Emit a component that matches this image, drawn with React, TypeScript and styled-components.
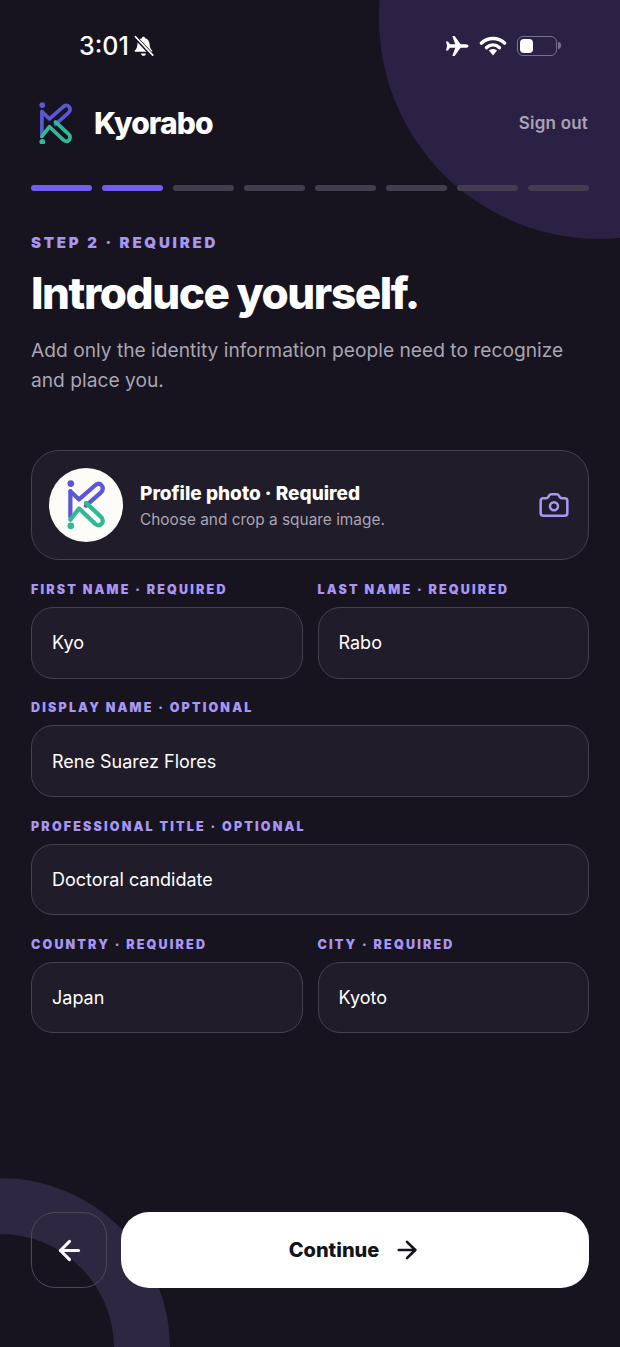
import React from "react";
import styled, { createGlobalStyle } from "styled-components";
import { ArrowLeft, ArrowRight, Camera } from "lucide-react";

const GlobalStyle = createGlobalStyle`
  html, body {
    margin: 0;
    padding: 0;
    background: #17141f;
  }
  * {
    box-sizing: border-box;
  }
`;

const KLogo = ({ size }: { size: number }) => (
  <svg width={size} height={(size * 44) / 34} viewBox="0 0 34 44" fill="none">
    <circle cx="3.4" cy="3.2" r="3" fill="#5b57d6" />
    <path
      d="M3 10 V33 M3 10 L10.8 17.4 L25.5 4.5 Q29 2 31.5 5.5 Q33 9 30 11.5 L17 23"
      stroke="#5b57d6"
      strokeWidth="3.8"
      strokeLinecap="round"
      strokeLinejoin="round"
    />
    <path
      d="M3 35.5 L10.8 25.5 L25.5 39.5 Q29 42 31.5 38.5 Q33 35 30 32.5 L17 20.5"
      stroke="#2fb996"
      strokeWidth="3.8"
      strokeLinecap="round"
      strokeLinejoin="round"
    />
    <circle cx="3.4" cy="41" r="3" fill="#2fb996" />
  </svg>
);

const fields = [
  [
    { label: "FIRST NAME · REQUIRED", value: "Kyo" },
    { label: "LAST NAME · REQUIRED", value: "Rabo" },
  ],
  [{ label: "DISPLAY NAME · OPTIONAL", value: "Rene Suarez Flores" }],
  [{ label: "PROFESSIONAL TITLE · OPTIONAL", value: "Doctoral candidate" }],
  [
    { label: "COUNTRY · REQUIRED", value: "Japan" },
    { label: "CITY · REQUIRED", value: "Kyoto" },
  ],
];

const App = () => {
  return (
    <Screen>
      <GlobalStyle />
      <TopBlob />
      <BottomRing />
      <Content>
        <StatusBar>
          <Clock>
            3:01
            <svg width="23" height="23" viewBox="0 0 20 20">
              <path
                d="M10 1.5c-.8 0-1.3.5-1.4 1.3C6 3.4 4.9 5.4 4.7 8c-.2 2.6-.6 4-2.2 5.4-.4.5-.1 1.2.6 1.2h13.8c.7 0 1-.7.6-1.2-1.6-1.4-2-2.8-2.2-5.4-.2-2.6-1.3-4.6-3.9-5.2-.1-.8-.6-1.3-1.4-1.3zM7.8 16c.2 1.2 1.1 2 2.2 2s2-.8 2.2-2z"
                fill="#fff"
              />
              <path d="M2.5 1.5 L18 18" stroke="#17141f" strokeWidth="3.4" />
              <path d="M3 1.5 L18 17.5" stroke="#fff" strokeWidth="1.5" strokeLinecap="round" />
            </svg>
          </Clock>
          <StatusIcons>
            <svg width="24" height="22" viewBox="0 0 24 22">
              <path
                d="M23.5 11c0-1.1-1.3-1.8-2.7-1.8h-5.2L9.6 1h-2.3l3 8.2H5L3 6.6H1l1.1 4.4L1 15.4h2l2-2.6h5.3l-3 8.2h2.3l6-8.2h5.2c1.4 0 2.7-.7 2.7-1.8z"
                fill="#fff"
              />
            </svg>
            <svg width="28" height="20" viewBox="0 0 28 20" fill="none">
              <path d="M2.5 7C9 1 19 1 25.5 7" stroke="#fff" strokeWidth="3.6" strokeLinecap="round" />
              <path d="M7.5 11.6c4-3.4 9-3.4 13 0" stroke="#fff" strokeWidth="3.4" strokeLinecap="round" />
              <path d="M10 14.6c2.4-2 5.6-2 8 0L14 19.4z" fill="#fff" />
            </svg>
            <Battery>
              <BatteryFill />
            </Battery>
          </StatusIcons>
        </StatusBar>

        <Header>
          <Brand>
            <KLogo size={33} />
            <BrandName>Kyorabo</BrandName>
          </Brand>
          <SignOut>Sign out</SignOut>
        </Header>

        <Progress>
          {Array.from({ length: 8 }).map((_, i) => (
            <Segment key={i} $active={i < 2} />
          ))}
        </Progress>

        <Eyebrow>STEP 2 · REQUIRED</Eyebrow>
        <Title>Introduce yourself.</Title>
        <Lead>
          Add only the identity information people need to recognize and place
          you.
        </Lead>

        <PhotoCard>
          <Avatar>
            <KLogo size={38} />
          </Avatar>
          <PhotoText>
            <PhotoTitle>Profile photo · Required</PhotoTitle>
            <PhotoHint>Choose and crop a square image.</PhotoHint>
          </PhotoText>
          <Camera size={32} color="#a896f5" strokeWidth={1.9} />
        </PhotoCard>

        <Form>
          {fields.map((row) => (
            <Row key={row[0].label}>
              {row.map((f) => (
                <Field key={f.label}>
                  <FieldLabel>{f.label}</FieldLabel>
                  <InputBox>{f.value}</InputBox>
                </Field>
              ))}
            </Row>
          ))}
        </Form>

        <Spacer />

        <Footer>
          <BackButton>
            <ArrowLeft size={31} color="#fff" strokeWidth={2.4} />
          </BackButton>
          <ContinueButton>
            Continue
            <ArrowRight size={28} color="#14121b" strokeWidth={2.3} />
          </ContinueButton>
        </Footer>
      </Content>
    </Screen>
  );
};

export default App;

const Screen = styled.div`
  position: relative;
  width: 620px;
  height: 1347px;
  overflow: hidden;
  background: #17141f;
  font-family: Inter, "Liberation Sans", sans-serif;
  color: #fff;
`;

const TopBlob = styled.div`
  position: absolute;
  top: -202px;
  right: -200px;
  width: 441px;
  height: 441px;
  border-radius: 50%;
  background: #2b2145;
`;

const BottomRing = styled.div`
  position: absolute;
  left: -170px;
  bottom: -171px;
  width: 340px;
  height: 340px;
  border-radius: 50%;
  border: 56px solid #2d2742;
`;

const Content = styled.div`
  position: relative;
  display: flex;
  flex-direction: column;
  height: 100%;
  padding: 0 31px 59px;
`;

const StatusBar = styled.div`
  display: flex;
  justify-content: space-between;
  align-items: center;
  height: 34px;
  margin-top: 29px;
  padding: 0 32px 0 48px;
`;

const Clock = styled.div`
  display: flex;
  align-items: center;
  gap: 3px;
  font-size: 25px;
  font-weight: 500;
`;

const StatusIcons = styled.div`
  display: flex;
  align-items: center;
  gap: 10px;
`;

const Battery = styled.div`
  position: relative;
  width: 40px;
  height: 20px;
  padding: 2px;
  border: 1.5px solid #77718a;
  border-radius: 6px;

  &::after {
    content: "";
    position: absolute;
    right: -5px;
    top: 5px;
    width: 3px;
    height: 7px;
    border-radius: 0 3px 3px 0;
    background: #77718a;
  }
`;

const BatteryFill = styled.div`
  width: 13px;
  height: 100%;
  border-radius: 4px;
  background: #fff;
`;

const Header = styled.div`
  display: flex;
  justify-content: space-between;
  align-items: center;
  margin-top: 37px;
  height: 46px;
`;

const Brand = styled.div`
  display: flex;
  align-items: center;
  gap: 22px;
  padding-left: 8px;
`;

const BrandName = styled.div`
  font-size: 30px;
  font-weight: 800;
  letter-spacing: -0.9px;
`;

const SignOut = styled.div`
  margin-right: 1px;
  font-size: 17px;
  font-weight: 600;
  letter-spacing: 0.2px;
  color: #a9a3b8;
`;

const Progress = styled.div`
  display: grid;
  grid-template-columns: repeat(8, 1fr);
  gap: 10px;
  margin-top: 39px;
`;

const Segment = styled.div<{ $active: boolean }>`
  height: 6px;
  border-radius: 3px;
  background: ${(p) => (p.$active ? "#735cf4" : "#433d4d")};
`;

const Eyebrow = styled.div`
  margin-top: 43px;
  font-size: 15px;
  line-height: 17px;
  font-weight: 900;
  letter-spacing: 2.78px;
  color: #a896f5;
`;

const Title = styled.h1`
  margin: 15px 0 0;
  font-size: 44px;
  line-height: 54px;
  font-weight: 800;
  letter-spacing: -1.45px;
`;

const Lead = styled.p`
  margin: 15px 0 0;
  font-size: 19.2px;
  line-height: 30px;
  color: #a9a5b3;
`;

const PhotoCard = styled.div`
  display: flex;
  align-items: center;
  gap: 17px;
  height: 110px;
  margin-top: 55px;
  padding: 0 18px 0 17px;
  border: 1.5px solid #45414f;
  border-radius: 28px;
  background: #201c2a;
`;

const Avatar = styled.div`
  display: flex;
  align-items: center;
  justify-content: center;
  width: 74px;
  height: 74px;
  border-radius: 50%;
  background: #fdfcf8;
`;

const PhotoText = styled.div`
  flex: 1;
  padding-top: 4px;
`;

const PhotoTitle = styled.div`
  font-size: 19px;
  line-height: 26px;
  font-weight: 800;
`;

const PhotoHint = styled.div`
  font-size: 15.4px;
  line-height: 26px;
  color: #a9a5b3;
`;

const Form = styled.div`
  display: flex;
  flex-direction: column;
  gap: 20.8px;
  margin-top: 21px;
`;

const Row = styled.div`
  display: flex;
  gap: 15px;
`;

const Field = styled.div`
  flex: 1;
  min-width: 0;
`;

const FieldLabel = styled.div`
  font-size: 12.5px;
  line-height: 18px;
  font-weight: 900;
  letter-spacing: 2.17px;
  color: #a896f5;
`;

const InputBox = styled.div`
  display: flex;
  align-items: center;
  height: 71.5px;
  margin-top: 8px;
  padding: 0 20px;
  border: 1.5px solid #45414f;
  border-radius: 22px;
  background: #201c2a;
  font-size: 18px;
`;

const Spacer = styled.div`
  flex: 1;
`;

const Footer = styled.div`
  display: flex;
  gap: 14px;
`;

const BackButton = styled.div`
  display: flex;
  align-items: center;
  justify-content: center;
  width: 76px;
  height: 76px;
  border: 1.5px solid #4d4858;
  border-radius: 24px;
`;

const ContinueButton = styled.div`
  flex: 1;
  display: flex;
  align-items: center;
  justify-content: center;
  gap: 14px;
  height: 76px;
  border-radius: 28px;
  background: #fff;
  color: #14121b;
  font-size: 20px;
  font-weight: 800;
`;
